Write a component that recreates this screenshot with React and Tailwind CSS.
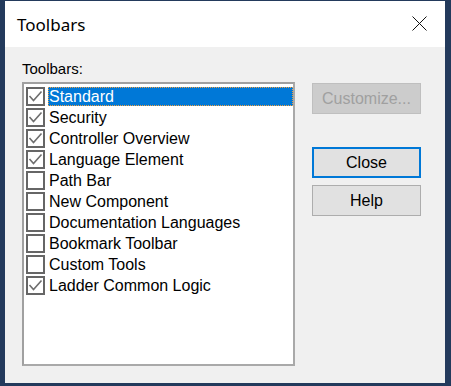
import React from "react";

const items = [
  ["Standard", true],
  ["Security", true],
  ["Controller Overview", true],
  ["Language Element", true],
  ["Path Bar", false],
  ["New Component", false],
  ["Documentation Languages", false],
  ["Bookmark Toolbar", false],
  ["Custom Tools", false],
  ["Ladder Common Logic", true],
];

function Box({ checked }) {
  return (
    <div className="w-[19px] h-[19px] shrink-0 border-2 border-[#666666] bg-white flex items-center justify-center">
      {checked && (
        <svg width="15" height="15" viewBox="0 0 15 15">
          <polyline points="1.5,7 5.5,11.5 13.5,2.5" fill="none" stroke="#6e6e6e" strokeWidth="1.6" />
        </svg>
      )}
    </div>
  );
}

export default function App() {
  return (
    <div className="w-[451px] h-[386px] bg-[#233a5c] pt-[1px] pl-[5px]" style={{ fontFamily: '"Liberation Sans", Arial, sans-serif' }}>
      <div className="w-[440px] h-[382px] bg-[#f0f0f0] flex flex-col">
        <div className="h-[46px] bg-white flex items-center justify-between pl-[12px] pr-[18px]">
          <span className="text-[17px] text-black leading-none" style={{ fontFamily: '"Noto Sans", sans-serif' }}>Toolbars</span>
          <svg width="15" height="15" viewBox="0 0 15 15" className="-mt-[1px]">
            <path d="M0.5 0.5 L14.5 14.5 M14.5 0.5 L0.5 14.5" stroke="#111" strokeWidth="1" />
          </svg>
        </div>
        <div className="flex pl-[17px] pt-[13px]">
          <div className="flex flex-col">
            <div className="text-[15px] leading-[18px] text-black h-[22px]">Toolbars:</div>
            <div className="w-[273px] h-[284px] border-2 border-t-[#a0a0a0] border-l-[#a0a0a0] border-r-[#a9a9a9] border-b-[#a9a9a9] bg-white pt-[2px] pl-[2px]">
              {items.map(([name, checked], i) => (
                <div key={name} className="h-[21px] flex items-center">
                  <Box checked={checked} />
                  <div
                    className={
                      "ml-[3px] h-[19px] flex items-center text-[16px] leading-none pl-[1px] " +
                      (i === 0
                        ? "flex-1 bg-[#0078d7] text-white outline outline-1 outline-dotted outline-[#f0a040] -outline-offset-1"
                        : "text-black")
                    }
                  >
                    {name}
                  </div>
                </div>
              ))}
            </div>
          </div>
          <div className="flex flex-col ml-[17px] pt-[23px]">
            <button className="w-[109px] h-[31px] bg-[#cccccc] border border-[#bfbfbf] text-[#a0a0a0] text-[16px]">Customize...</button>
            <button className="mt-[33px] w-[109px] h-[31px] bg-[#e1e1e1] border-2 border-[#0078d7] text-black text-[16px]">Close</button>
            <button className="mt-[7px] w-[109px] h-[31px] bg-[#e1e1e1] border border-[#adadad] text-black text-[16px]">Help</button>
          </div>
        </div>
      </div>
    </div>
  );
}
